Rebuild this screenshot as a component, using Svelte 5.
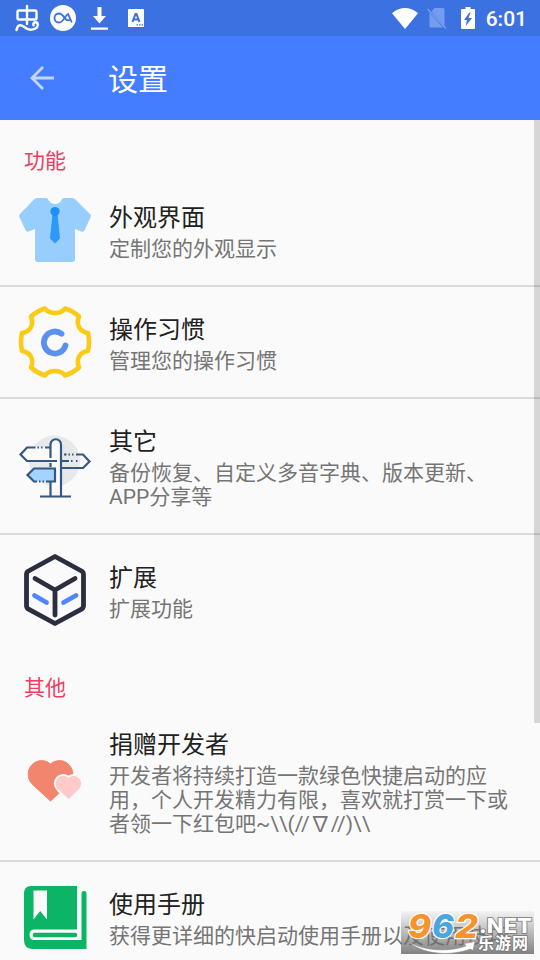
<script lang="ts">
	type IconName = 'shirt' | 'gear' | 'signpost' | 'cube' | 'hearts' | 'book';

	interface Item {
		icon: IconName;
		title: string;
		summary: string;
	}

	interface Section {
		label: string;
		items: Item[];
	}

	const sections: Section[] = [
		{
			label: '功能',
			items: [
				{ icon: 'shirt', title: '外观界面', summary: '定制您的外观显示' },
				{ icon: 'gear', title: '操作习惯', summary: '管理您的操作习惯' },
				{ icon: 'signpost', title: '其它', summary: '备份恢复、自定义多音字典、版本更新、APP分享等' },
				{ icon: 'cube', title: '扩展', summary: '扩展功能' }
			]
		},
		{
			label: '其他',
			items: [
				{
					icon: 'hearts',
					title: '捐赠开发者',
					summary: '开发者将持续打造一款绿色快捷启动的应用，个人开发精力有限，喜欢就打赏一下或者领一下红包吧~\\\\(//∇//)\\\\'
				},
				{ icon: 'book', title: '使用手册', summary: '获得更详细的快启动使用手册以及使用技巧' }
			]
		}
	];
</script>

<div class="screen">
	<div class="status-bar">
		<div class="notifications">
			<svg class="bug" width="26" height="28" viewBox="0 0 26 28" fill="none" stroke="#fff" stroke-width="2.4" stroke-linecap="round" stroke-linejoin="round">
				<path d="M5 6.500h16q1.500 0 1.500 1.500v6q0 1.500-1.500 1.500H5q-1.500 0-1.500-1.500V8Q3.500 6.500 5 6.500zM13 2v18" />
				<path d="M2.500 26c1-5 4-6 7-3.500 4 3.500 8 4 12 2 3-1.500 3-6 .3-6.200-2.200 0-2.800 1.500-2.300 3" />
			</svg>
			<svg class="ca" width="26" height="26" viewBox="0 0 26 26">
				<circle cx="13" cy="13" r="13" fill="#fff" />
				<path d="M21.800 17.500 18 9C14.500 10.500 14 17.500 9 17.500c-6 0-6-9 0-9 4 0 5 5 8 6.700h3.500" fill="none" stroke="#3c71e2" stroke-width="1.800" />
			</svg>
			<svg class="download" width="17" height="23" viewBox="0 0 17 23" fill="#fff">
				<path d="M6.500 0h4v9H15l-6.500 7.500L2 9h4.500zM0 20.500h17v2.300H0z" />
			</svg>
			<svg class="input" width="16" height="18" viewBox="0 0 16 18">
				<rect width="16" height="18" rx=".8" fill="#fff" />
				<path d="M4.500 13 7.500 5h1l3 8M5.600 10.500h4.800" fill="none" stroke="#3c71e2" stroke-width="2" />
				<path d="M8.500 15.200H10v1.400H8.500zM11 15.200h1.500v1.400H11zM13.500 15.200H15v1.400h-1.500z" fill="#3c71e2" />
			</svg>
		</div>
		<div class="indicators">
			<svg class="wifi" width="26" height="21" viewBox="0 0 26 21">
				<path d="M0 5.200Q13-5 26 5.200L13 21z" fill="#fff" />
			</svg>
			<svg class="sim" width="20" height="21" viewBox="0 0 20 21">
				<path d="M7.500 0H16q1.500 0 1.500 1.500V18L4.500 3.500zM2.500 4.500 16 19.500H4q-1.500 0-1.500-1.500z" fill="#769cef" />
				<path d="m.5 1 18.500 19.500" stroke="#769cef" stroke-width="1.600" />
			</svg>
			<svg class="battery" width="14" height="22" viewBox="0 0 14 22">
				<path d="M4.500 0h5v2H13q1 0 1 1v18q0 1-1 1H1q-1 0-1-1V3q0-1 1-1h3.500z" fill="#fff" />
				<path d="M8.300 5.500 3 13h3l-1.200 6L11 11H7.500l2-5.500z" fill="#3c71e2" />
			</svg>
			<span class="clock">6:01</span>
		</div>
	</div>

	<header class="toolbar">
		<svg class="back" width="24" height="24" viewBox="0 0 24 24" fill="none" stroke="#c4d6ff" stroke-width="2.800">
			<path d="M24 12H2M13 1 2 12l11 11" />
		</svg>
		<h1>设置</h1>
	</header>

	<main>
		{#each sections as section}
			<section>
				<h2>{section.label}</h2>
				{#each section.items as item}
					<div class="item">
						<svg class="icon" width="72" height="72" viewBox="0 0 72 72" fill="none">
							{#if item.icon === 'shirt'}
								<path d="M18 4h9q2 0 2.500 2c2 5.500 11 5.500 13 0Q43 4 45 4h8q2 0 3.500 1.500L71 20q1.500 1.500.7 3l-6 13q-1 2.500-3.500 1.500L56 35v30q0 3-3 3H19q-3 0-3-3V35l-6.500 2.500Q7.500 38.300 6.500 36L.4 23Q-.4 21.500 1 20L15 5.500Q16.500 4 18 4z" fill="#97cefd" />
								<path d="M33.500 20h5l2.500 24.500-5 5-5-5z" fill="#2d98fb" />
								<circle cx="36" cy="17.500" r="4.600" fill="#1e8ff5" />
							{:else if item.icon === 'gear'}
								<path d="M26 2.500c4 6 16 6 20 0q8 2.500 14 8c-3.500 8 1 15.500 9 16.500q2 9 0 18c-8 1-12.500 8-9 16.500q-6 5.500-14 8c-4-6-16-6-20 0q-8-2.500-14-8C15.500 53 11 46 3 45q-2-9 0-18c8-1 12.500-8.500 9-16.500q6-5.500 14-8z" stroke="#fbcb16" stroke-width="4.600" stroke-linejoin="round" />
								<path d="M42.500 27.700A11 11 0 1 0 46.500 39.500" stroke="#5b90ee" stroke-width="5.800" stroke-linecap="round" />
							{:else if item.icon === 'signpost'}
								<circle cx="35.500" cy="31" r="25.500" fill="#e6e8eb" />
								<path d="M32 11q5-5 10 0v55H32z" fill="#fafafa" />
								<path d="M8 17.500h24V31H8l-6.500-6.500z" fill="#fafafa" />
								<path d="M15 38h21v13.500H15L8.500 45z" fill="#a5d3ff" />
								<g stroke="#36577f" stroke-width="2.200">
									<path d="M31.500 28V14.500a5 5 0 0 1 10.500 0V66M31.500 33v4M31.500 52v14M21 66.500h31" />
									<path d="M16.500 17.500H8l-6.500 7L8 31h30M18.500 17.500h1.500M22 17.500h1.500M26 17.500h6" />
									<path d="M42 38h22l6.500-6.500-6.500-7h-7M45 24.500h2.500M49.500 24.500h1.500M53 24.500h1.500M43 31h7M52 31h1.500M57 31h1.500" />
									<path d="M18 51.500h-3L8.500 45l6.500-6.500h21v13h-9M20 51.500h1.500M23.500 51.500H25" />
								</g>
							{:else if item.icon === 'cube'}
								<path d="M36 2.500 62.500 17q2 1.200 2 3.500v31q0 2.500-2 3.700L36 69.500 9.500 55.200q-2-1.200-2-3.700v-31q0-2.300 2-3.500z" stroke="#2a2e3f" stroke-width="4.800" stroke-linejoin="round" />
								<path d="M16 24.500 36 36l20-11.500M36 36v25" stroke="#2a2e3f" stroke-width="4.800" stroke-linecap="round" stroke-linejoin="round" />
								<path d="m15.500 41.500 12 7M57 41.500l-12.500 7" stroke="#5087f8" stroke-width="4.800" stroke-linecap="round" />
							{:else if item.icon === 'hearts'}
								<path d="M31.500 56 13.500 39.500C1 26 18 8 31.500 19 45 8 62 26 49.500 39.500z" fill="#f2856e" stroke="#f2856e" stroke-linejoin="round" />
								<path d="M49.500 54 39.500 44.500c-7.500-8 2.500-18 10-11.500 7.500-6.500 17.500 3.500 10 11.500z" fill="#ffcaca" stroke="#fafafa" stroke-width="4" stroke-linejoin="round" paint-order="stroke" />
							{:else if item.icon === 'book'}
								<path d="M12 5h46v43.500H15.500q-5 0-5 5.200t5 5.300H62.500V12q0-2 2.500-2t2.500 2v56H14q-9 0-9-9V13q0-8 7-8z" fill="#0bb565" />
								<path d="M14.500 9.500H28v29L21.200 30l-6.700 8.500z" fill="#fafafa" />
								<path d="M16 54h40" stroke="#0bb565" stroke-width="4.600" stroke-linecap="round" />
							{/if}
						</svg>
						<div class="text">
							<h3>{item.title}</h3>
							<p>{item.summary}</p>
						</div>
					</div>
				{/each}
			</section>
		{/each}
	</main>

	<div class="scrollbar"></div>

	<div class="watermark">
		<svg width="133" height="43" viewBox="0 0 133 43">
			<g class="digits" stroke="#fff" stroke-width="2.400" paint-order="stroke">
				<text x="7" y="27" textLength="23" lengthAdjust="spacingAndGlyphs" fill="#f7932d">9</text>
				<text x="31" y="27" textLength="22" lengthAdjust="spacingAndGlyphs" fill="#4ba6e0">6</text>
				<text x="54" y="27" textLength="23" lengthAdjust="spacingAndGlyphs" fill="#f7932d">2</text>
			</g>
			<path d="M7 30c12 9 38 12 58 5l-2-2.500 11-2-2 9-2.500-1.500C48 46 20 43 7 30z" fill="#fff" stroke="#888" stroke-width=".6" />
			<g fill="#fff" stroke="#777" stroke-width="1.600" paint-order="stroke">
				<text class="net" x="78" y="22" textLength="53" lengthAdjust="spacingAndGlyphs">.NET</text>
				<text class="site" x="77" y="38" textLength="50">乐游网</text>
			</g>
		</svg>
	</div>
</div>

<style>
	:global(body) {
		margin: 0;
	}

	.screen {
		position: relative;
		width: 540px;
		height: 960px;
		overflow: hidden;
		background: #fafafa;
		font-family: Roboto, 'Noto Sans CJK SC', sans-serif;
	}

	h1, h2, h3, p {
		margin: 0;
		font-weight: 400;
	}

	svg {
		display: block;
		flex: none;
		overflow: visible;
	}

	.status-bar {
		display: flex;
		justify-content: space-between;
		box-sizing: border-box;
		height: 36px;
		padding: 0 13px 0 14px;
		background: #3c71e2;
	}

	.notifications, .indicators {
		display: flex;
		align-items: center;
	}

	.ca {
		margin-left: 10px;
	}

	.download {
		margin-left: 15px;
	}

	.input {
		margin-left: 20px;
	}

	.wifi {
		margin-right: 9px;
	}

	.sim {
		margin-right: 14px;
	}

	.clock {
		margin-left: 11px;
		color: #fff;
		font-size: 21px;
		font-weight: 500;
		line-height: 38px;
		padding-top: 2px;
	}

	.toolbar {
		display: flex;
		align-items: center;
		height: 84px;
		padding-left: 30px;
		background: #447dff;
	}

	h1 {
		margin-left: 54px;
		padding-top: 3px;
		color: #fff;
		font-size: 30px;
		line-height: 40px;
	}

	h2 {
		height: 55px;
		padding-left: 24px;
		box-sizing: border-box;
		padding-top: 25px;
		color: #ee3e60;
		font-size: 21px;
		line-height: 32px;
	}

	.item {
		display: flex;
		align-items: center;
		box-sizing: border-box;
		padding: 0 24px 0 19px;
		border-bottom: 2px solid #dadada;
	}

	.item:last-child {
		border-color: transparent;
	}

	.text {
		flex: 1;
		margin-left: 18px;
		padding: 27px 0 24px;
	}

	h3 {
		color: #212121;
		font-size: 24px;
		line-height: 32px;
	}

	p {
		margin-top: 3px;
		color: #757575;
		font-size: 21px;
		line-height: 24px;
	}

	.scrollbar {
		position: absolute;
		top: 120px;
		right: 0;
		width: 6px;
		height: 603px;
		background: rgba(0, 0, 0, 0.14);
	}

	.watermark {
		position: absolute;
		left: 401px;
		top: 911px;
		background: linear-gradient(rgba(120, 120, 120, 0.05), rgba(110, 110, 110, 0.85));
	}

	.digits {
		font: italic 800 33px Inter, sans-serif;
	}

	.net {
		font: 800 20px Inter, sans-serif;
	}

	.site {
		font: 700 16px 'Noto Sans CJK SC', sans-serif;
	}
</style>
